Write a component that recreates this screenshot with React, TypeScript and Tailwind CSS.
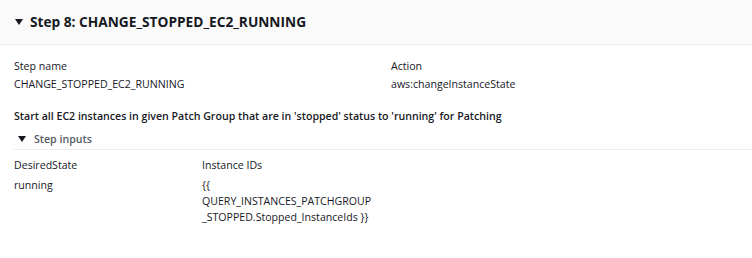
import React from "react";

function Caret({ className }: { className?: string }) {
  return (
    <svg className={className} width="8" height="6" viewBox="0 0 8 6">
      <path d="M0 0 H8 L4 6 Z" fill="#16191f" />
    </svg>
  );
}

export default function App() {
  return (
    <div className="w-[752px] h-[258px] bg-white text-[#16191f] text-[10.6px] leading-[16px] font-['Open_Sans',_Arial,_sans-serif]">
      <div className="h-[45px] bg-[#fafafa] border-b border-[#eaeded] flex items-center pl-[15px]">
        <Caret className="mr-[7px]" />
        <span className="text-[13.7px] font-bold leading-[20px]">Step 8: CHANGE_STOPPED_EC2_RUNNING</span>
      </div>
      <div className="px-[14px] pt-[13px]">
        <div className="flex">
          <div className="w-[377px] flex flex-col gap-[2px]">
            <div>Step name</div>
            <div>CHANGE_STOPPED_EC2_RUNNING</div>
          </div>
          <div className="flex flex-col gap-[2px]">
            <div>Action</div>
            <div>aws:changeInstanceState</div>
          </div>
        </div>
        <div className="mt-[16px] font-semibold">
          Start all EC2 instances in given Patch Group that are in 'stopped' status to 'running' for Patching
        </div>
      </div>
      <div className="pl-[14px] mt-[4px]">
        <div className="flex items-center h-[22px] pl-[4px] border-b border-[#eaeded]">
          <Caret className="mr-[8px]" />
          <span className="font-semibold text-[#545b64]">Step inputs</span>
        </div>
        <div className="flex pt-[7px]">
          <div className="w-[188px] flex flex-col gap-[4px]">
            <div>DesiredState</div>
            <div>running</div>
          </div>
          <div className="flex flex-col gap-[4px]">
            <div>Instance IDs</div>
            <div>
              <div>{"{{"}</div>
              <div>QUERY_INSTANCES_PATCHGROUP</div>
              <div>{"_STOPPED.Stopped_InstanceIds }}"}</div>
            </div>
          </div>
        </div>
      </div>
    </div>
  );
}
